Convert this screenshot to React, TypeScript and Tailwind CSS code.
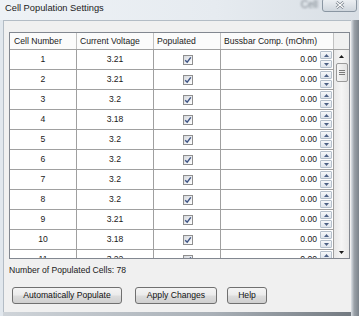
import React from "react";

const rows: [string, string][] = [
  ["1", "3.21"],
  ["2", "3.21"],
  ["3", "3.2"],
  ["4", "3.18"],
  ["5", "3.2"],
  ["6", "3.2"],
  ["7", "3.2"],
  ["8", "3.2"],
  ["9", "3.21"],
  ["10", "3.18"],
  ["11", "3.22"],
];

function CheckBox() {
  return (
    <div className="w-[10px] h-[10px] border border-[#8f8f8f] bg-[linear-gradient(135deg,#d6d9de,#ffffff)] flex items-center justify-center">
      <svg width="8" height="8" viewBox="0 0 8 8">
        <path d="M1.2 4.2 L3.2 6.2 L6.8 1.4" fill="none" stroke="#3d5384" strokeWidth="1.4" />
      </svg>
    </div>
  );
}

function Tri({ up, color = "#4d6185", w = 5 }: { up?: boolean; color?: string; w?: number }) {
  return (
    <svg width={w} height="3" viewBox="0 0 5 3">
      <path d={up ? "M0 3 L2.5 0 L5 3 Z" : "M0 0 L5 0 L2.5 3 Z"} fill={color} />
    </svg>
  );
}

function SpinButtons() {
  return (
    <div className="flex flex-col gap-[1px] mr-[1px]">
      <div className="w-[12px] h-[8px] border border-[#b4bfcb] rounded-[1px] bg-[linear-gradient(to_bottom,#f6f8fa,#dfe5ec)] flex items-center justify-center">
        <Tri up />
      </div>
      <div className="w-[12px] h-[8px] border border-[#b4bfcb] rounded-[1px] bg-[linear-gradient(to_bottom,#f6f8fa,#dfe5ec)] flex items-center justify-center">
        <Tri />
      </div>
    </div>
  );
}

function WinButton({ label, width }: { label: string; width: string }) {
  return (
    <div
      className={`${width} h-[17px] border border-[#707070] rounded-[3px] bg-[linear-gradient(to_bottom,#f4f4f4_0%,#ebebeb_48%,#dddddd_52%,#cfcfcf_100%)] flex items-center justify-center text-[8.6px] text-[#111]`}
    >
      {label}
    </div>
  );
}

export default function App() {
  return (
    <div className="w-[359px] h-[316px] overflow-hidden bg-[#e4eaf0] font-['Liberation_Sans',Arial,sans-serif] flex flex-col">
      {/* title bar */}
      <div className="h-[20px] flex items-start bg-[linear-gradient(to_right,#eef2f6,#e6ebf0_60%,#d9dfe5)]">
        <div className="pl-[5px] h-[17px] leading-[17px] text-[9.3px] text-[#1b1b1b]">
          Cell Population Settings
        </div>
        <div className="flex-1" />
        <div className="text-[10px] leading-[10px] text-[#7d858d] blur-[1.2px] mr-[4px]">Cell</div>
        <div className="w-[35px] h-[14px] -mt-[2px] mr-[2px] border border-[#8a96a2] rounded-[3px] bg-[linear-gradient(to_bottom,#eef1f4,#cfd6dd)] flex items-center justify-center blur-[0.4px]">
          <svg width="10" height="8" viewBox="0 0 10 8">
            <path d="M1.5 1 L8.5 7 M8.5 1 L1.5 7" stroke="#6d7782" strokeWidth="2.6" />
            <path d="M1.5 1 L8.5 7 M8.5 1 L1.5 7" stroke="#ffffff" strokeWidth="1.3" />
          </svg>
        </div>
      </div>

      {/* body */}
      <div className="flex flex-1">
        <div className="w-[3px] bg-[#e1e7ed]" />
        <div className="flex flex-col">
          <div className="w-[348px] h-[292px] bg-[#f0f0f0] border-l border-t border-[#b3bcc5] pl-[5px] pt-[11px] flex flex-col">
            {/* grid */}
            <div className="w-[341px] h-[227px] border border-[#828790] bg-white flex flex-col overflow-hidden text-[8.6px] text-[#1a1a1a]">
              <div className="h-[17px] flex border-b border-[#a0a0a0] bg-[#fbfbfb] shrink-0">
                <div className="w-[67px] border-r border-[#c2c2c2] pl-[4px] flex items-center">Cell Number</div>
                <div className="w-[77px] border-r border-[#c2c2c2] pl-[3px] flex items-center">Current Voltage</div>
                <div className="w-[67px] border-r border-[#c2c2c2] pl-[3px] flex items-center">Populated</div>
                <div className="w-[113px] border-r border-[#c2c2c2] pl-[3px] flex items-center">Bussbar Comp. (mOhm)</div>
                <div className="flex-1 bg-[#f0f0f0]" />
              </div>
              <div className="flex flex-1 min-h-0">
                <div className="w-[324px] flex flex-col overflow-hidden">
                  {rows.map(([n, v]) => (
                    <div key={n} className="h-[20px] shrink-0 flex border-b border-[#a0a0a0]">
                      <div className="w-[67px] border-r border-[#a0a0a0] flex items-center justify-center">{n}</div>
                      <div className="w-[77px] border-r border-[#a0a0a0] flex items-center justify-center">{v}</div>
                      <div className="w-[67px] border-r border-[#a0a0a0] flex items-center justify-center pl-[2px]">
                        <CheckBox />
                      </div>
                      <div className="w-[113px] border-r border-[#a0a0a0] flex items-center">
                        <div className="flex-1 text-right pr-[3px]">0.00</div>
                        <SpinButtons />
                      </div>
                    </div>
                  ))}
                </div>
                {/* scrollbar */}
                <div className="flex-1 bg-[linear-gradient(to_right,#e8e8e8,#f5f5f5,#e8e8e8)] flex flex-col items-center">
                  <div className="h-[12px] flex items-center justify-center">
                    <Tri up color="#1a1a1a" />
                  </div>
                  <div className="w-[12px] h-[19px] mt-[1px] border border-[#9a9a9a] rounded-[2px] bg-[linear-gradient(to_right,#f6f6f6,#e2e2e2)] flex flex-col items-center justify-center gap-[1px]">
                    <div className="w-[6px] h-[1px] bg-[#7a7a7a]" />
                    <div className="w-[6px] h-[1px] bg-[#7a7a7a]" />
                    <div className="w-[6px] h-[1px] bg-[#7a7a7a]" />
                  </div>
                  <div className="flex-1" />
                  <div className="h-[12px] flex items-center justify-center">
                    <Tri color="#1a1a1a" />
                  </div>
                </div>
              </div>
            </div>

            <div className="mt-[5px] h-[12px] leading-[12px] text-[8.6px] text-[#1a1a1a]">
              Number of Populated Cells: 78
            </div>

            <div className="mt-[11px] ml-[3px] flex">
              <WinButton label="Automatically Populate" width="w-[110px]" />
              <div className="ml-[13px]">
                <WinButton label="Apply Changes" width="w-[82px]" />
              </div>
              <div className="ml-[10px]">
                <WinButton label="Help" width="w-[40px]" />
              </div>
            </div>
          </div>
          <div className="flex-1 bg-[linear-gradient(to_right,#cfd4d9,#a9b0b7_60%,#737a81)]" />
        </div>
        <div className="flex-1 bg-[linear-gradient(to_right,#dde2e7,#9aa1a8_40%,#7b838b)]" />
      </div>
    </div>
  );
}
